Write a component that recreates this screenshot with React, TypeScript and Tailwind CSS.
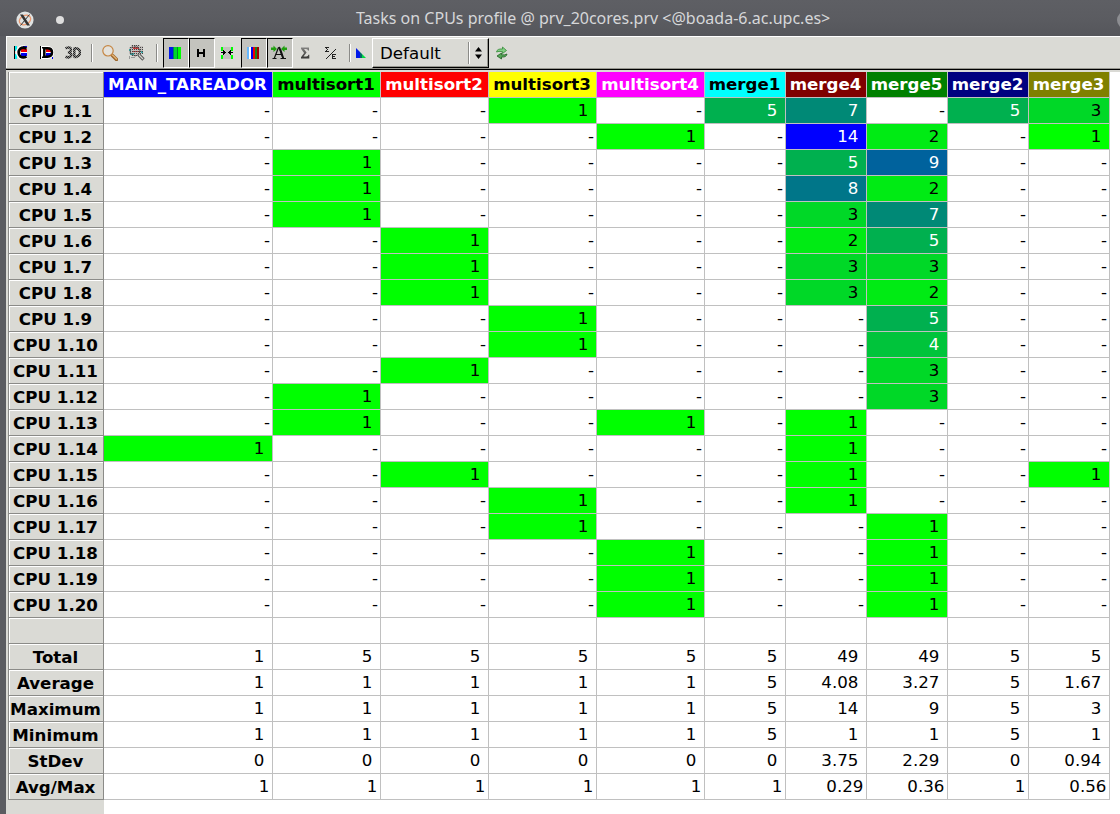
import React from "react";

const columns = [
  { name: "MAIN_TAREADOR", cls: "bg-[#0000ff] text-white" },
  { name: "multisort1", cls: "bg-[#00ff00] text-black" },
  { name: "multisort2", cls: "bg-[#ff0000] text-white" },
  { name: "multisort3", cls: "bg-[#ffff00] text-black" },
  { name: "multisort4", cls: "bg-[#ff00ff] text-white" },
  { name: "merge1", cls: "bg-[#00ffff] text-black" },
  { name: "merge4", cls: "bg-[#800000] text-white" },
  { name: "merge5", cls: "bg-[#008000] text-white" },
  { name: "merge2", cls: "bg-[#000080] text-white" },
  { name: "merge3", cls: "bg-[#808000] text-white" },
];

const cpuRows = [
  "- - - 1 - 5 7 - 5 3",
  "- - - - 1 - 14 2 - 1",
  "- 1 - - - - 5 9 - -",
  "- 1 - - - - 8 2 - -",
  "- 1 - - - - 3 7 - -",
  "- - 1 - - - 2 5 - -",
  "- - 1 - - - 3 3 - -",
  "- - 1 - - - 3 2 - -",
  "- - - 1 - - - 5 - -",
  "- - - 1 - - - 4 - -",
  "- - 1 - - - - 3 - -",
  "- 1 - - - - - 3 - -",
  "- 1 - - 1 - 1 - - -",
  "1 - - - - - 1 - - -",
  "- - 1 - - - 1 - - 1",
  "- - - 1 - - 1 - - -",
  "- - - 1 - - - 1 - -",
  "- - - - 1 - - 1 - -",
  "- - - - 1 - - 1 - -",
  "- - - - 1 - - 1 - -",
].map((row) => row.split(" "));

const summary: [string, string][] = [
  ["Total", "1 5 5 5 5 5 49 49 5 5"],
  ["Average", "1 1 1 1 1 5 4.08 3.27 5 1.67"],
  ["Maximum", "1 1 1 1 1 5 14 9 5 3"],
  ["Minimum", "1 1 1 1 1 5 1 1 5 1"],
  ["StDev", "0 0 0 0 0 0 3.75 2.29 0 0.94"],
  ["Avg/Max", "1 1 1 1 1 1 0.29 0.36 1 0.56"],
];

const heat: Record<string, string> = {
  "1": "bg-[#00ff00] text-black",
  "2": "bg-[#00eb14] text-black",
  "3": "bg-[#00d827] text-black",
  "4": "bg-[#00c43b] text-white",
  "5": "bg-[#00b04f] text-white",
  "7": "bg-[#008976] text-white",
  "8": "bg-[#007689] text-white",
  "9": "bg-[#00629d] text-white",
  "14": "bg-[#0000ff] text-white",
};

const grid = "grid grid-cols-[96px_169px_repeat(4,108px)_repeat(5,81px)] h-[26px]";

function RowLabel({ children }: { children?: React.ReactNode }) {
  return (
    <div className="flex items-center justify-center border-b border-r border-l border-[#8b8b88] bg-[#dadad5] shadow-[inset_1px_1px_0_#fff] font-bold whitespace-nowrap pt-[3px] pr-px">
      {children}
    </div>
  );
}

function Cell({ value = "", pad = "pr-[7.6px]" }: { value?: string; pad?: string }) {
  return (
    <div className={`flex items-center justify-end border-b border-r border-[#c0c0c0] bg-white pt-px ${pad}`}>
      {value}
    </div>
  );
}

function HeatCell({ value }: { value: string }) {
  if (value === "-") return <Cell value="-" pad="pr-[2px]" />;
  return (
    <div className={`flex items-center justify-end border-b border-r border-[#c0c0c0] pt-px pr-[7.6px] ${heat[value]}`}>
      {value}
    </div>
  );
}

function Icon({ children, w = 16 }: { children: React.ReactNode; w?: number }) {
  return (
    <svg width={w} height="16" viewBox={`0 0 ${w} 16`} shapeRendering="crispEdges">
      {children}
    </svg>
  );
}

function Tool({ children, pressed = false, nudge = false }: { children: React.ReactNode; pressed?: boolean; nudge?: boolean }) {
  return (
    <div
      className={`flex h-[30px] w-[26px] shrink-0 items-center justify-center ${nudge ? "pr-[2px]" : ""} ${
        pressed ? "bg-[#c3c3be] border border-t-black border-l-black border-b-white border-r-white" : ""
      }`}
    >
      {children}
    </div>
  );
}

function Separator() {
  return <div className="h-[18px] w-[2px] shrink-0 border-l border-r border-l-[#8b8b88] border-r-white" />;
}

function OpenControl() {
  return (
    <svg width="16" height="16" viewBox="0 0 16 16">
      <path d="M2 1h2v5H2zM2 9h2v5H2z" fill="#00f0f0" />
      <path d="M1 1h1v13H1z" fill="#000" />
      <path d="M12.5 3.6Q9.5 1.8 7 3.6Q3.4 7.5 7 11.6Q9.5 13.4 13 11.6" fill="none" stroke="#fff" strokeWidth="4.6" />
      <path d="M8 4h6v3H8z" fill="#f00000" />
      <path d="M10 1h4v1h-4zM8 8h6v3H8z" fill="#0000f0" />
      <path d="M8 7h6v1H8z" fill="#fff" />
      <path d="M13.5 3.6Q10 1.7 7.4 3.5Q3.8 7.5 7.4 11.6Q10 13.3 13.5 11.6" fill="none" stroke="#000" strokeWidth="2.7" />
    </svg>
  );
}

function OpenData() {
  return (
    <svg width="16" height="16" viewBox="0 0 16 16">
      <path d="M1 1h1v13H1z" fill="#000" />
      <path d="M2 1h8q5 1.5 5 6.5T10 14H2z" fill="#fff" />
      <path d="M7 4h5v3H7z" fill="#f00000" />
      <path d="M7 8h5v3H7zM13 12h1v2h-1z" fill="#0000f0" />
      <path d="M5.3 3.3h3.2q4.5 0 4.5 4.2t-4.5 4.2H5.3z" fill="none" stroke="#000" strokeWidth="2.5" />
      <path d="M3 2h3v1.5H3zM3 11.5h3V13H3z" fill="#000" />
    </svg>
  );
}

function ThreeD() {
  return (
    <svg width="16" height="16" viewBox="0 0 16 16">
      <defs>
        <pattern id="dither" width="2" height="2" patternUnits="userSpaceOnUse">
          <path d="M0 0h2v2H0z" fill="#8d8d8b" />
          <path d="M0 0h1v1H0zM1 1h1v1H1z" fill="#202020" />
        </pattern>
      </defs>
      <path
        d="M0.5 3.4Q6 1 6 4.8Q6 7 3 7.4Q6.7 7.8 6.3 10.5Q5 13.4 0.5 11.8M9.3 2.8V12.4M9.3 3.2h1.7q4 .8 4 4.3t-4 4.5H9.3"
        fill="none"
        stroke="url(#dither)"
        strokeWidth="2.5"
      />
    </svg>
  );
}

function Magnifier() {
  return (
    <svg width="16" height="16" viewBox="0 0 16 16">
      <path d="M10.5 10.5l4 4" stroke="#9c6429" strokeWidth="3.4" strokeLinecap="round" />
      <path d="M10.5 10l4 4" stroke="#e0b274" strokeWidth="1.6" strokeLinecap="round" />
      <circle cx="6" cy="5.8" r="5.2" fill="#e4e2dc" stroke="#c58643" strokeWidth="1.2" />
    </svg>
  );
}

function MagnifierDisabled() {
  return (
    <svg width="18" height="16" viewBox="0 0 18 16">
      <defs>
        <pattern id="speckle" width="2" height="2" patternUnits="userSpaceOnUse">
          <path d="M0 0h1v1H0z" fill="#444" />
        </pattern>
      </defs>
      <g shapeRendering="crispEdges">
        <path d="M3 0h9v1h3v8h-3v2H3V9H1V2h2z" fill="#c4bfbc" />
        <path d="M5 2h6v2H5zM5 6h7v1H5z" fill="#c43e3e" />
        <path d="M1 4h2v2H1zM2 8h4v2H2zM13 6h2v2h-2z" fill="#3aa5a5" />
        <path d="M3 0h9v1h3v8h-3v2H3V9H1V2h2z" fill="url(#speckle)" />
        <path d="M1 11h1v3H1zM3 12h4v1H3z" fill="#999" />
      </g>
      <circle cx="7" cy="6" r="4.8" fill="none" stroke="#444" strokeWidth="1" strokeDasharray="2 1" />
      <path d="M11 10l4.5 4.5" stroke="#555" strokeWidth="3.2" />
      <path d="M11 10l4 4" stroke="#d4d4ce" strokeWidth="1.2" />
    </svg>
  );
}

function ColorMode() {
  return (
    <Icon>
      <path d="M1 2h4v12h-4z" fill="#0018e8" />
      <path d="M5 2h1v12h-1z" fill="#008060" />
      <path d="M6 2h3v12h-3z" fill="#00d828" />
      <path d="M9 2h1v12h-1z" fill="#008830" />
      <path d="M10 2h3v12h-3z" fill="#00ff00" />
    </Icon>
  );
}

function HorizontalMode() {
  return (
    <Icon>
      <path d="M4 4h2v3h4v-3h2v8h-2v-3h-4v3h-2z" fill="#000" />
    </Icon>
  );
}

function HideColumns() {
  return (
    <Icon>
      <path d="M4 2h8v12h-8z" fill="#c3c3be" />
      <path d="M2 2h2v4h-2zM2 10h2v4h-2zM12 2h2v4h-2zM12 10h2v4h-2z" fill="#00ff00" />
      <path d="M2 7h2v1h-2zM4 5h1v1h1v1h1v1h-1v1h-1v1h-1zM14 7h-2v1h2zM12 5h-1v1h-1v1h-1v1h1v1h1v1h1z" fill="#000" />
    </Icon>
  );
}

function LabelColors() {
  return (
    <Icon>
      <path d="M2 2h2v12h-2z" fill="#66b8ff" />
      <path d="M4 2h2v12h-2z" fill="#fff" />
      <path d="M6 2h2v12h-2z" fill="#0000f0" />
      <path d="M8 2h2v12h-2z" fill="#f00000" />
      <path d="M10 2h2v12h-2z" fill="#188018" />
      <path d="M12 2h2v12h-2z" fill="#a00000" />
    </Icon>
  );
}

function ShortLabels() {
  return (
    <svg width="16" height="16" viewBox="0 0 16 16">
      <path d="M0 2.5h2.5V.5L6 4 2.5 7V5H0zM16 2.5h-2.5V.5L10 4l3.5 3V5H16z" fill="#20a010" />
      <path d="M7.5 2.5L3.2 13.5M8 2l4.2 11.5M5 9.5h5.5" fill="none" stroke="#111" strokeWidth="1.2" />
      <path d="M8.2 2l4 11.5M9.4 4.5l3 9" fill="none" stroke="#111" strokeWidth="1.7" />
      <path d="M1.5 13.5h4M9.5 13.5H15" stroke="#111" strokeWidth="1.2" />
    </svg>
  );
}

function Sigma() {
  return (
    <svg width="16" height="16" viewBox="0 0 16 16">
      <defs>
        <linearGradient id="sigmaFill" x1="0" y1="0" x2="0" y2="1">
          <stop offset="0" stopColor="#858583" />
          <stop offset="1" stopColor="#353533" />
        </linearGradient>
      </defs>
      <path d="M4 2.5h8v3h-1q0-1.5-2-1.5H7L9.6 7.5 6.5 11.5h2.8q2 0 2-1.8h1v3.8H4v-1.2l3.1-4.2L4 3.8z" fill="url(#sigmaFill)" />
    </svg>
  );
}

function SigmaRatio() {
  return (
    <Icon>
      <path
        d="M2 2h4v1h-2v1h1v1h-1v1h2v1h-4v-1h1v-1h1v-1h-1v-1h-1zM9 9h4v1h-3v1h2v1h-2v1h3v1h-4zM12 4h1v1h-1zM11 5h1v1h-1zM10 6h1v1h-1zM9 7h1v1h-1zM8 8h1v1h-1zM7 9h1v1h-1zM6 10h1v1h-1zM5 11h1v1h-1zM4 12h1v1h-1zM3 13h1v1h-1z"
        fill="#222"
      />
    </Icon>
  );
}

function Gradient() {
  return (
    <svg width="11" height="12" viewBox="0 0 11 12">
      <path d="M0 1l4 4v6H0z" fill="#0018e8" />
      <path d="M4 5l2 2v4H4z" fill="#006868" />
      <path d="M6 7l4 4H6z" fill="#00d840" />
    </svg>
  );
}

function Refresh() {
  return (
    <svg width="14" height="16" viewBox="0 0 14 16">
      <path d="M1.5 7Q2 3.5 7.5 4V2l4 3.5-4 3V6.6Q3.5 6 1.5 7z" fill="#83cf83" stroke="#348a37" strokeWidth=".8" />
      <path d="M12 9q-.5 3.5-5.5 3v2L2 11l4.5-3v1.8Q10 10.2 12 9z" fill="#55a758" stroke="#225f25" strokeWidth=".8" />
    </svg>
  );
}

function Toolbar() {
  return (
    <div className="flex h-[34px] shrink-0 items-center border-t border-b border-t-white border-b-black bg-[#dadad5] pl-px shadow-[inset_0_-1px_0_#96968f,inset_1px_0_0_#fff]">
      <div className="flex items-center pl-[1px]">
        <Tool><OpenControl /></Tool>
        <Tool><OpenData /></Tool>
        <Tool><ThreeD /></Tool>
      </div>
      <div className="ml-[5px]"><Separator /></div>
      <div className="ml-[5px] flex items-center">
        <Tool nudge><Magnifier /></Tool>
        <Tool><MagnifierDisabled /></Tool>
      </div>
      <div className="ml-[6px]"><Separator /></div>
      <div className="ml-[5px] flex items-center">
        <Tool pressed><ColorMode /></Tool>
        <Tool pressed nudge><HorizontalMode /></Tool>
        <Tool nudge><HideColumns /></Tool>
        <Tool pressed nudge><LabelColors /></Tool>
        <Tool pressed nudge><ShortLabels /></Tool>
        <Tool nudge><Sigma /></Tool>
        <Tool nudge><SigmaRatio /></Tool>
      </div>
      <div className="ml-[4px]"><Separator /></div>
      <div className="ml-[5px] mr-[5px] w-[11px]"><Gradient /></div>
      <div className="flex h-[30px] w-[117px] shrink-0 items-center border border-t-white border-l-white border-b-black border-r-black pl-[7px] text-[16.67px] text-black shadow-[inset_-1px_-1px_0_#96968f]">
        <span className="w-[88px] pt-[2px]">Default</span>
        <div className="h-[22px] w-[2px] border-l border-r border-l-[#8b8b88] border-r-white" />
        <svg className="ml-[5px]" width="7" height="12" viewBox="0 0 7 12">
          <path d="M0 4.5L3.5 0 7 4.5zM0 7.5L3.5 12 7 7.5z" fill="#000" />
        </svg>
      </div>
      <div className="ml-[6px]"><Refresh /></div>
    </div>
  );
}

export default function App() {
  return (
    <div className="flex h-[814px] w-[1120px] flex-col overflow-hidden bg-[#5b5c61] font-['DejaVu_Sans',sans-serif] text-[16.67px] leading-none text-black">
      <header className="flex h-[36px] shrink-0 items-center overflow-hidden bg-linear-to-b from-[#5e5f64] via-[#5b5c61] to-[#55565b] pt-[3px]">
        <svg className="ml-[16px] shrink-0" width="18" height="18" viewBox="0 0 18 18">
          <circle cx="9" cy="9" r="8.6" fill="#dfe2e2" />
          <ellipse cx="9" cy="9" rx="6" ry="4.4" fill="none" stroke="#e9986f" strokeWidth="1.3" transform="rotate(-28 9 9)" />
          <path d="M4 3.5h3l7 11h-3z" fill="#333" />
          <path d="M13.5 3.5L4.5 14.5" stroke="#333" strokeWidth="1" />
        </svg>
        <div className="ml-[22px] size-[8px] shrink-0 rounded-full bg-[#dedede]" />
        <h1 className="ml-[292px] w-[480px] shrink-0 whitespace-nowrap pb-[3px] font-['Noto_Sans',sans-serif] text-[16px] font-normal text-[#d6d7d9]">
          Tasks on CPUs profile @ prv_20cores.prv &lt;@boada-6.ac.upc.es&gt;
        </h1>
        <div className="ml-[281px] size-[18px] shrink-0 rounded-full bg-[#8c8d91]" />
      </header>
      <main className="ml-[6px] flex min-h-0 flex-1 flex-col bg-[#dadad5]">
        <Toolbar />
        <div className="ml-[2px] flex min-h-0 flex-1 flex-col bg-white">
          <div className="h-[2px] shrink-0 bg-[#dadad5]" />
          <div className={grid}>
            <RowLabel />
            {columns.map((c) => (
              <div key={c.name} className={`flex items-center justify-center border-b border-r border-[#c0c0c0] pt-px pr-px font-bold ${c.cls}`}>
                {c.name}
              </div>
            ))}
          </div>
          {cpuRows.map((row, i) => (
            <div key={i} className={grid}>
              <RowLabel>CPU 1.{i + 1}</RowLabel>
              {row.map((v, j) => <HeatCell key={j} value={v} />)}
            </div>
          ))}
          <div className={grid}>
            <RowLabel />
            {columns.map((c) => <Cell key={c.name} />)}
          </div>
          {summary.map(([name, values]) => (
            <div key={name} className={grid}>
              <RowLabel>{name}</RowLabel>
              {values.split(" ").map((v, j) => (
                <Cell key={j} value={v} pad={name === "Avg/Max" ? "pr-[2.6px]" : "pr-[7.6px]"} />
              ))}
            </div>
          ))}
          <div className="w-[96px] flex-1 bg-[#dadad5]" />
        </div>
      </main>
    </div>
  );
}
